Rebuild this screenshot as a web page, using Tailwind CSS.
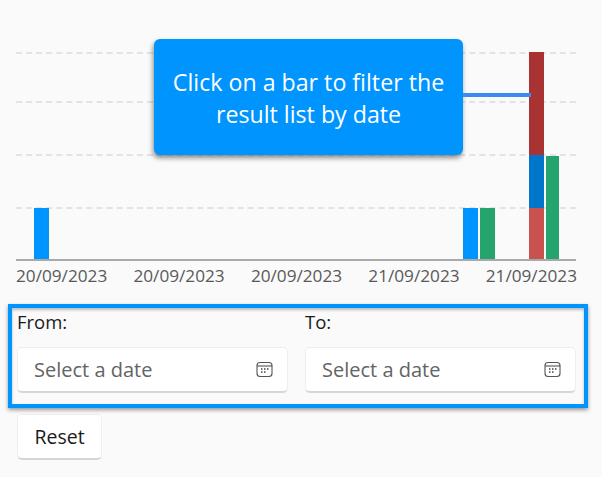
<!DOCTYPE html>
<html lang="en">

<head>
    <meta charset="UTF-8">
    <title>Date filter</title>
    <script src="https://cdn.jsdelivr.net/npm/@tailwindcss/browser@4"></script>
</head>

<body class="bg-[#fafafa] font-['Open_Sans',sans-serif] w-[602px] h-[477px] overflow-hidden relative">

    <!-- chart -->
    <div class="relative ml-[16px] w-[560px] h-[260px] pt-[52px]">
        <div class="flex flex-col">
            <div class="h-[49px] border-t-2 border-dashed border-[#e3e3e3]"></div>
            <div class="h-[53px] border-t-2 border-dashed border-[#e3e3e3]"></div>
            <div class="h-[53px] border-t-2 border-dashed border-[#e3e3e3]"></div>
            <div class="h-[52px] border-t-2 border-dashed border-[#e3e3e3] border-b-0"></div>
        </div>
        <div class="absolute inset-x-0 top-[52px] h-[209px] flex items-end border-b-2 border-[#a9a9a9]">
            <div class="ml-[18px] w-[15px] h-[51px] bg-[#0094ff]"></div>
            <div class="ml-[414px] w-[15px] h-[51px] bg-[#0094ff]"></div>
            <div class="ml-[2px] w-[15px] h-[51px] bg-[#25a56d]"></div>
            <div class="ml-[34px] w-[15px] flex flex-col">
                <div class="h-[103px] bg-[#a93333]"></div>
                <div class="h-[53px] bg-[#0075cc]"></div>
                <div class="h-[51px] bg-[#c9524e]"></div>
            </div>
            <div class="ml-[2px] w-[13px] h-[103px] bg-[#25a56d]"></div>
        </div>
        <!-- callout -->
        <div class="absolute left-[138px] top-[39px] w-[309px] h-[116px] pt-[2px] rounded-[6px] bg-[#0094ff] shadow-[-1px_3px_5px_rgba(0,0,0,0.45)] flex items-center justify-center text-center text-white text-[23.2px] leading-[32px]">
            <p>Click on a bar to filter the<br>result list by date</p>
        </div>
        <div class="absolute left-[447px] top-[93px] w-[68px] h-[4px] bg-[#3b8bf0]"></div>
    </div>

    <!-- axis labels -->
    <div class="ml-[16px] mt-[5px] w-[561px] flex justify-between text-[17.2px] leading-[22px] text-[#595959]">
        <span>20/09/2023</span>
        <span>20/09/2023</span>
        <span>20/09/2023</span>
        <span>21/09/2023</span>
        <span>21/09/2023</span>
    </div>

    <!-- date range -->
    <div class="ml-[17px] mt-[23px] w-[559px] grid grid-cols-[271px_271px] gap-x-[17px] text-[#1a1a1a]">
        <div>
            <label class="block text-[18.5px] leading-[24px]">From:</label>
            <div class="mt-[13px] h-[46px] pl-[16px] pr-[14px] flex items-center justify-between bg-white rounded-[5px] border border-[#eeeeee] border-b-2 border-b-[#d6d6d6]">
                <span class="text-[20px] text-[#646464]">Select a date</span>
                <svg width="17" height="17" viewBox="0 0 17 17" fill="none">
                    <rect x="1" y="1.5" width="15" height="14" rx="3" stroke="#555" stroke-width="1.1"/>
                    <path d="M1 5h15" stroke="#555" stroke-width="1.1"/>
                    <path d="M5 8h1.5M8 8h1.5M11 8h1.5M5 11h1.5M8 11h1.5" stroke="#444" stroke-width="1.4"/>
                </svg>
            </div>
        </div>
        <div>
            <label class="block text-[18.5px] leading-[24px]">To:</label>
            <div class="mt-[13px] h-[46px] pl-[16px] pr-[14px] flex items-center justify-between bg-white rounded-[5px] border border-[#eeeeee] border-b-2 border-b-[#d6d6d6]">
                <span class="text-[20px] text-[#646464]">Select a date</span>
                <svg width="17" height="17" viewBox="0 0 17 17" fill="none">
                    <rect x="1" y="1.5" width="15" height="14" rx="3" stroke="#555" stroke-width="1.1"/>
                    <path d="M1 5h15" stroke="#555" stroke-width="1.1"/>
                    <path d="M5 8h1.5M8 8h1.5M11 8h1.5M5 11h1.5M8 11h1.5" stroke="#444" stroke-width="1.4"/>
                </svg>
            </div>
        </div>
    </div>

    <button class="block ml-[17px] mt-[21px] w-[85px] h-[46px] bg-white rounded-[5px] border border-[#eeeeee] border-b-2 border-b-[#d6d6d6] text-[19.5px] text-[#1a1a1a]">Reset</button>

    <!-- highlight over the date range -->
    <div class="absolute left-[8px] top-[304px] w-[580px] h-[104px] border-4 border-[#0094ff] shadow-[0_2px_4px_rgba(0,0,0,0.4),inset_0_2px_3px_rgba(0,0,0,0.25)]"></div>

</body>

</html>
